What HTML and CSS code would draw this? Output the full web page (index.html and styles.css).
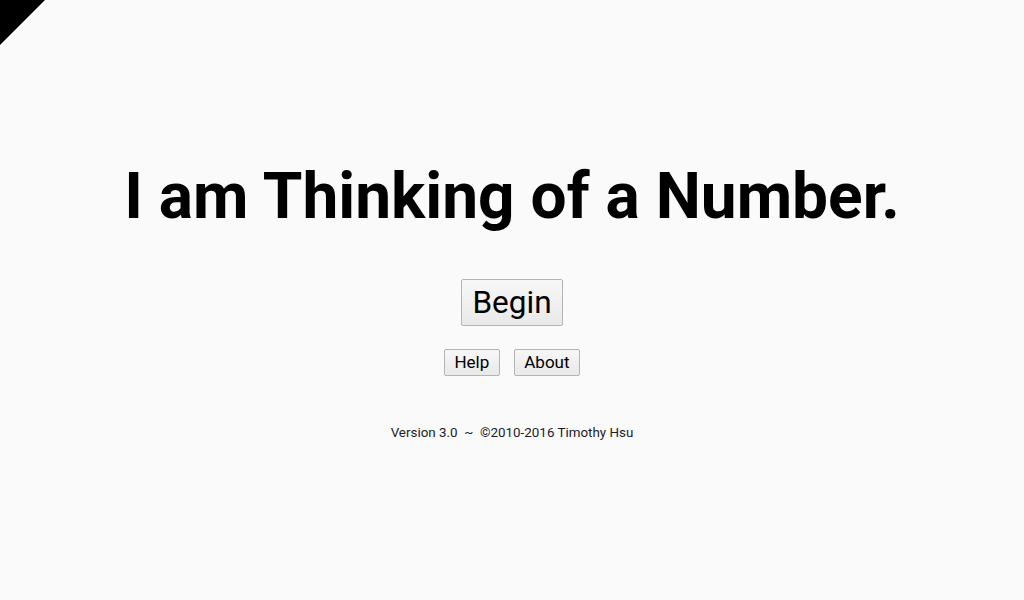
FILE: index.html
```html
<!DOCTYPE html>
<html>
<head>
<meta charset="utf-8">
<link rel="stylesheet" href="styles.css">
</head>
<body>
<div class="corner"></div>
<main class="main">
  <h1 class="title">I am Thinking of a Number.</h1>
  <button class="btn btn-big">Begin</button>
  <div class="row">
    <button class="btn btn-small">Help</button>
    <button class="btn btn-small">About</button>
  </div>
  <p class="footer">Version 3.0 &nbsp;~&nbsp; ©2010-2016 Timothy Hsu</p>
</main>
</body>
</html>
```
FILE: styles.css
```css
html, body {
  margin: 0;
  padding: 0;
  background: #fafafa;
  font-family: Roboto, "Liberation Sans", sans-serif;
  width: 1024px;
  height: 600px;
  overflow: hidden;
}
.corner {
  position: absolute;
  left: 0;
  top: 0;
  width: 0;
  height: 0;
  border-top: 45px solid #000;
  border-right: 45px solid transparent;
}
.main {
  display: flex;
  flex-direction: column;
  align-items: center;
  padding-top: 157px;
}
.title {
  margin: 0;
  font-size: 64px;
  font-weight: 700;
  line-height: 80px;
  color: #000;
}
.btn {
  font-family: Roboto, "Liberation Sans", sans-serif;
  color: #000;
  background: linear-gradient(#f7f7f7, #e9e9e9);
  border: 1px solid #b4b4b4;
  border-radius: 2px;
  padding: 0;
  box-sizing: border-box;
}
.btn-big {
  margin-top: 42px;
  width: 102px;
  height: 47px;
  font-size: 31.5px;
  padding-bottom: 1px;
}
.row {
  display: flex;
  gap: 14px;
  margin-top: 23px;
}
.btn-small {
  height: 27px;
  font-size: 17px;
  padding: 0 9.5px 1px;
}
.footer {
  margin: 49px 0 0;
  font-size: 13.4px;
  color: #1c1c2a;
}
```
